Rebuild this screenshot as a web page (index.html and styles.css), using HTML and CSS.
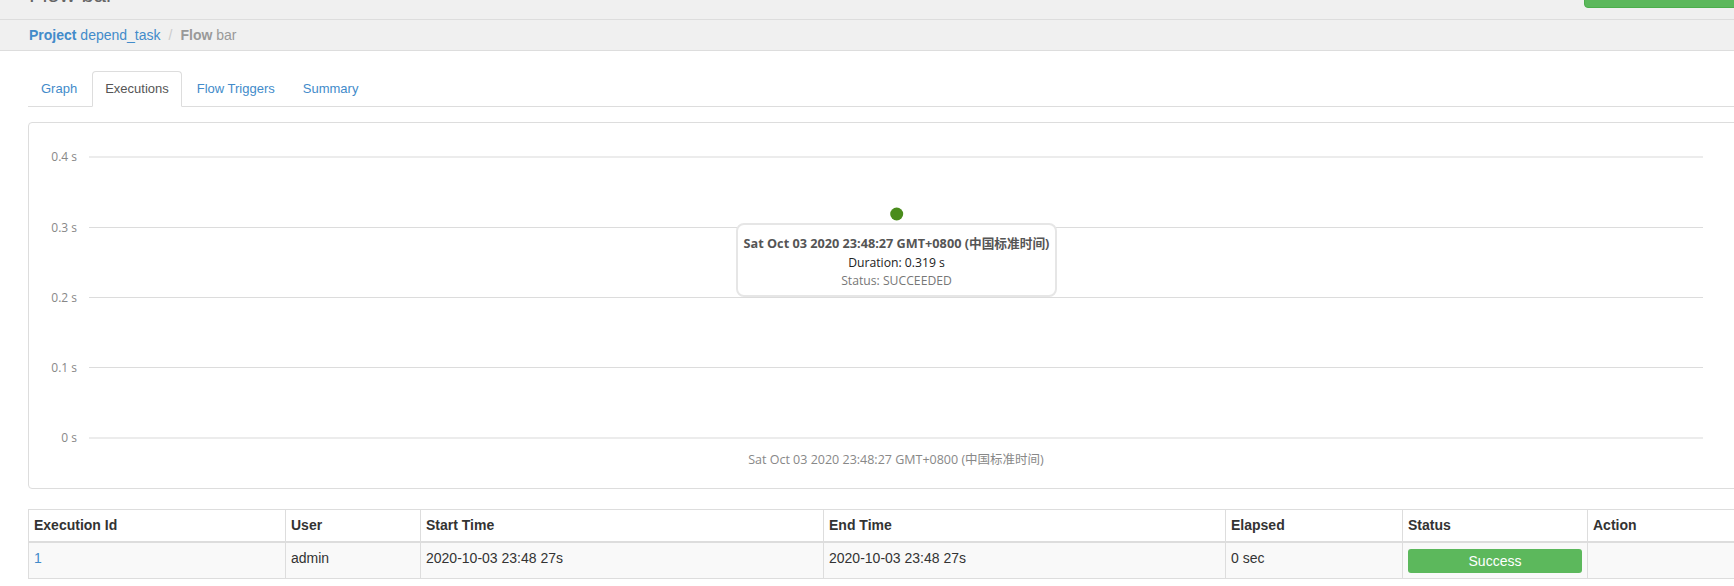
FILE: index.html
```html
<!DOCTYPE html>
<html lang="en">
<head>
<meta charset="utf-8">
<title>Flow bar</title>
<link rel="stylesheet" href="styles.css">
</head>
<body>
<div class="page">
  <div class="topbar">
    <h1 class="title">Flow bar</h1>
    <button class="btn-exec" type="button" aria-label="Execute Flow"></button>
  </div>
  <div class="crumbs">
    <a class="crumb-link" href="#"><b>Project</b> depend_task</a>
    <span class="sep">/</span>
    <span class="crumb-current"><b>Flow</b> bar</span>
  </div>
  <div class="content">
    <ul class="tabs">
      <li><a href="#">Graph</a></li>
      <li class="active"><a href="#">Executions</a></li>
      <li><a href="#">Flow Triggers</a></li>
      <li><a href="#">Summary</a></li>
    </ul>

    <div class="panel">
      <svg class="chart" width="1730" height="365" viewBox="0 0 1730 365">
        <rect class="grid-edge" x="60" y="33" width="1614" height="2"/>
        <rect class="grid" x="60" y="104" width="1614" height="1"/>
        <rect class="grid" x="60" y="174" width="1614" height="1"/>
        <rect class="grid" x="60" y="244" width="1614" height="1"/>
        <rect class="grid-edge" x="60" y="314" width="1614" height="2"/>
        <text class="axis" x="48" y="38">0.4 s</text>
        <text class="axis" x="48" y="109">0.3 s</text>
        <text class="axis" x="48" y="179">0.2 s</text>
        <text class="axis" x="48" y="249">0.1 s</text>
        <text class="axis" x="48" y="319">0 s</text>
        <text class="xlabel" x="867" y="341">Sat Oct 03 2020 23:48:27 GMT+0800 (中国标准时间)</text>
        <circle class="dot" cx="867.7" cy="91" r="6.5"/>
      </svg>
      <div class="tooltip">
        <div class="tip-date">Sat Oct 03 2020 23:48:27 GMT+0800 (中国标准时间)</div>
        <div class="tip-dur">Duration: 0.319 s</div>
        <div class="tip-status">Status: SUCCEEDED</div>
      </div>
    </div>

    <table class="exec-table">
      <colgroup>
        <col class="c-id"><col class="c-user"><col class="c-start"><col class="c-end"><col class="c-elapsed"><col class="c-status"><col>
      </colgroup>
      <thead>
        <tr>
          <th>Execution Id</th>
          <th>User</th>
          <th>Start Time</th>
          <th>End Time</th>
          <th>Elapsed</th>
          <th>Status</th>
          <th>Action</th>
        </tr>
      </thead>
      <tbody>
        <tr>
          <td><a class="exec-link" href="#">1</a></td>
          <td>admin</td>
          <td>2020-10-03 23:48 27s</td>
          <td>2020-10-03 23:48 27s</td>
          <td>0 sec</td>
          <td><span class="status-success">Success</span></td>
          <td></td>
        </tr>
      </tbody>
    </table>
  </div>
</div>
</body>
</html>
```

FILE: styles.css
```css
html, body {
  margin: 0;
  padding: 0;
  overflow: hidden;
  background: #fff;
}

body {
  font-family: "Liberation Sans", Arial, "Noto Sans CJK SC", sans-serif;
  font-size: 14px;
  color: #333;
}

.page {
  width: 1760px;
}

.topbar {
  display: flex;
  justify-content: space-between;
  height: 19px;
  overflow: hidden;
  background: #f0f0f0;
  border-bottom: 1px solid #ddd;
  padding-left: 29px;
}

.title {
  margin: -16px 0 0 0;
  font-size: 22px;
  line-height: 22px;
  font-weight: normal;
  color: #666;
}

.btn-exec {
  margin-top: -26px;
  height: 34px;
  width: 176px;
  background: #5cb85c;
  border: 1px solid #4cae4c;
  border-radius: 4px;
}

.crumbs {
  display: flex;
  align-items: center;
  height: 30px;
  background: #f0f0f0;
  border-bottom: 1px solid #ddd;
  padding-left: 29px;
  font-size: 14px;
}

.crumb-link {
  color: #428bca;
  text-decoration: none;
}

.sep {
  color: #ccc;
  padding: 0 8px;
}

.crumb-current {
  color: #999;
}

.content {
  padding: 20px 0 0 28px;
}

.tabs {
  display: flex;
  margin: 0;
  padding: 0;
  list-style: none;
  border-bottom: 1px solid #ddd;
}

.tabs li {
  margin-bottom: -1px;
  margin-right: 2px;
}

.tabs a {
  display: block;
  padding: 8px 12px;
  line-height: 18px;
  font-size: 13px;
  color: #428bca;
  text-decoration: none;
  border: 1px solid transparent;
  border-radius: 4px 4px 0 0;
}

.tabs .active a {
  color: #555;
  background: #fff;
  border-color: #ddd #ddd transparent #ddd;
}

.panel {
  position: relative;
  margin-top: 15px;
  height: 365px;
  border: 1px solid #ddd;
  border-radius: 4px;
}

.chart {
  display: block;
}

.grid {
  fill: #dcdcdc;
}

.grid-edge {
  fill: #ececec;
}

.axis {
  font-family: "Open Sans", "Noto Sans", sans-serif;
  font-size: 12px;
  fill: #888;
  text-anchor: end;
}

.xlabel {
  font-family: "Open Sans", "Noto Sans", "Noto Sans CJK SC", sans-serif;
  font-size: 12.5px;
  fill: #888;
  text-anchor: middle;
}

.dot {
  fill: #4a8c1c;
}

.tooltip {
  position: absolute;
  left: 707px;
  top: 100px;
  width: 321px;
  height: 74px;
  box-sizing: border-box;
  padding-top: 9px;
  background: #fff;
  border: 2px solid #e6e6e6;
  border-radius: 8px;
  text-align: center;
  font-family: "Open Sans", "Noto Sans", "Noto Sans CJK SC", sans-serif;
  font-size: 12.2px;
}

.tip-date {
  line-height: 19px;
  font-weight: bold;
  font-size: 12.7px;
  color: #555;
}

.tip-dur {
  line-height: 19px;
  color: #222;
}

.tip-status {
  line-height: 17px;
  color: #777;
}

.exec-table {
  margin-top: 20px;
  width: 1732px;
  table-layout: fixed;
  border-collapse: collapse;
  font-size: 14px;
}

.c-id { width: 257px; }
.c-user { width: 135px; }
.c-start { width: 403px; }
.c-end { width: 402px; }
.c-elapsed { width: 177px; }
.c-status { width: 185px; }

.exec-table th,
.exec-table td {
  border: 1px solid #ddd;
  padding: 5px;
  line-height: 20px;
  text-align: left;
  vertical-align: top;
}

.exec-table th {
  font-weight: bold;
  color: #333;
  border-bottom-width: 2px;
  height: 21px;
}

.exec-table tbody tr {
  background: #f9f9f9;
}

.exec-link {
  color: #428bca;
  text-decoration: none;
}

.status-success {
  display: block;
  margin-top: 1px;
  height: 24px;
  line-height: 24px;
  background: #5cb85c;
  border-radius: 3px;
  color: #fff;
  text-align: center;
}
```
